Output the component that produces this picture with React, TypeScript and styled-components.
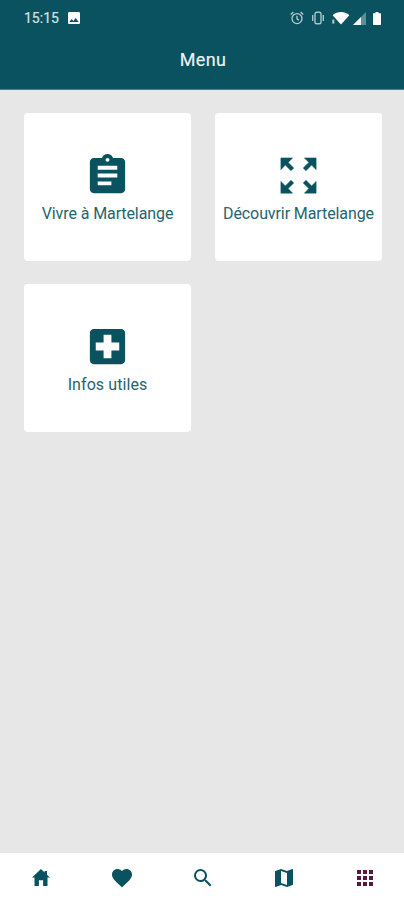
import React from "react";
import styled, { createGlobalStyle } from "styled-components";
import {
  MdApps,
  MdAssignment,
  MdFavorite,
  MdImage,
  MdLocalHospital,
  MdMap,
  MdSearch,
} from "react-icons/md";

const teal = "#0a525f";

const GlobalStyle = createGlobalStyle`
  *, *::before, *::after { box-sizing: border-box; }
  body { margin: 0; background: #e7e7e7; font-family: Roboto, sans-serif; }
  svg { display: block; flex: none; }
`;

const Screen = styled.div`
  display: flex;
  flex-direction: column;
  height: 900px;
  background: #e7e7e7;
`;

const Header = styled.header`
  height: 90px;
  background: ${teal};
  color: #fff;
  border-bottom: 1px solid #4d7d88;
`;

const StatusBar = styled.div`
  display: flex;
  align-items: center;
  height: 36px;
  padding: 0 23px 0 24px;
`;

const Clock = styled.span`
  width: 42px;
  font-size: 14px;
  line-height: 36px;
  -webkit-text-stroke: 0.2px currentColor;
  color: #d3e2e5;
`;

const StatusIcons = styled.div`
  display: flex;
  align-items: center;
  margin-left: auto;
`;

const Gap = styled.span<{ $w: number }>`
  width: ${(p) => p.$w}px;
`;

const Title = styled.h1`
  margin: 0;
  padding-left: 2px;
  font-size: 18px;
  font-weight: 400;
  line-height: 48px;
  letter-spacing: 0.35px;
  -webkit-text-stroke: 0.15px currentColor;
  text-align: center;
  color: #edf4f5;
`;

const Grid = styled.main`
  flex: 1;
  display: grid;
  grid-template-columns: 167px 167px;
  grid-auto-rows: 148px;
  gap: 23px 24px;
  padding: 23px 24px;
`;

const Card = styled.button`
  display: flex;
  flex-direction: column;
  align-items: center;
  padding: 39px 0 0;
  border: 0;
  border-radius: 4px;
  background: #fff;
  color: ${teal};
  font-family: inherit;
`;

const Label = styled.span<{ $spacing: number }>`
  margin-top: 5px;
  font-size: 16px;
  line-height: 20px;
  letter-spacing: ${(p) => p.$spacing}px;
  white-space: nowrap;
  color: #27646f;
`;

const TabBar = styled.nav`
  display: grid;
  grid-template-columns: repeat(4, 81px) 80px;
  height: 47px;
  background: #fff;
`;

const Tab = styled.button<{ $active?: boolean }>`
  display: flex;
  align-items: center;
  justify-content: center;
  padding: 3px 0 0 ${(p) => (p.$active ? 1 : 0)}px;
  border: 0;
  background: none;
  color: ${(p) => (p.$active ? "#5c1440" : teal)};
`;

const AlarmIcon = () => (
  <svg width="14" height="14" viewBox="0 0 14 14" fill="none" stroke="#b5cdd1" strokeWidth="1.3">
    <circle cx="7" cy="7.6" r="5" />
    <path d="M7 4.8v3l2 1.4M.7 3.4 3.4 1M13.3 3.4 10.6 1" />
  </svg>
);

const VibrateIcon = () => (
  <svg width="14" height="14" viewBox="0 0 14 14" fill="none" stroke="#a9c5ca" strokeWidth="1.4">
    <rect x="4" y="1.2" width="6" height="11.6" rx="1.8" />
    <path d="M1.7 4v6M12.3 4v6" />
  </svg>
);

const WifiIcon = () => (
  <svg width="18" height="14" viewBox="0 0 18 14" fill="#fff">
    <path d="M.6 4.2C5.5-.2 12.5-.2 17.4 4.2L9 13.6Z" />
    <path d="M.3 8.6h2v4h-2z" opacity=".7" />
  </svg>
);

const SignalIcon = () => (
  <svg width="13" height="13" viewBox="0 0 13 13" fill="#fff">
    <path d="M13 0v13H0Z" opacity=".35" />
    <path d="M8 5v8H0Z" opacity=".9" />
  </svg>
);

const BatteryIcon = () => (
  <svg width="8" height="13" viewBox="0 0 8 13" fill="#fff">
    <path d="M2.5 0h3v1.2H7.5q.5 0 .5.5v10.6q0 .7-.7.7H.7q-.7 0-.7-.7V1.7q0-.5.5-.5h2Z" />
  </svg>
);

const ExpandIcon = ({ size }: { size: number }) => (
  <svg
    width={size}
    height={size}
    viewBox="0 0 24 24"
    fill="currentColor"
    stroke="currentColor"
    strokeWidth="0.25"
  >
    <path d="M15 3l2.3 2.3-2.89 2.87 1.42 1.42L18.7 6.7 21 9V3zM3 9l2.3-2.3 2.87 2.89 1.42-1.42L6.7 5.3 9 3H3zM9 21l-2.3-2.3 2.89-2.87-1.42-1.42L5.3 17.3 3 15v6zM21 15l-2.3 2.3-2.87-2.89-1.42 1.42 2.89 2.87L15 21h6z" />
  </svg>
);

const HomeIcon = () => (
  <svg width="18" height="19" viewBox="0 0 18 19" fill="currentColor">
    <path d="M9 0 0 8.6h2.5V17h4.4v-5.8h4.2V17h4.4V8.6H18l-3-2.9V2h-2.4v1.4Z" />
  </svg>
);

const cards = [
  { label: "Vivre à Martelange", Icon: MdAssignment, spacing: -0.1 },
  { label: "Découvrir Martelange", Icon: ExpandIcon, spacing: -0.1 },
  { label: "Infos utiles", Icon: MdLocalHospital, spacing: 0.08 },
];

export default function App() {
  return (
    <>
      <GlobalStyle />
      <Screen>
        <Header>
          <StatusBar>
            <Clock>15:15</Clock>
            <MdImage size={16} />
            <StatusIcons>
              <AlarmIcon />
              <Gap $w={7} />
              <VibrateIcon />
              <Gap $w={7} />
              <WifiIcon />
              <Gap $w={3} />
              <SignalIcon />
              <Gap $w={7} />
              <BatteryIcon />
            </StatusIcons>
          </StatusBar>
          <Title>Menu</Title>
        </Header>
        <Grid>
          {cards.map(({ label, Icon, spacing }) => (
            <Card key={label}>
              <Icon size={47} />
              <Label $spacing={spacing}>{label}</Label>
            </Card>
          ))}
        </Grid>
        <TabBar>
          <Tab aria-label="Accueil"><HomeIcon /></Tab>
          <Tab aria-label="Favoris"><MdFavorite size={24} /></Tab>
          <Tab aria-label="Recherche"><MdSearch size={24} /></Tab>
          <Tab aria-label="Carte"><MdMap size={24} /></Tab>
          <Tab aria-label="Menu" $active><MdApps size={24} /></Tab>
        </TabBar>
      </Screen>
    </>
  );
}
